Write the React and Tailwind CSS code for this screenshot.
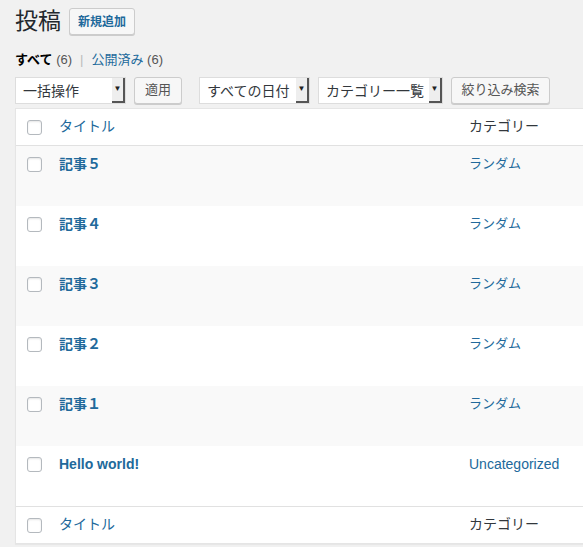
const font = { fontFamily: '"Liberation Sans", "Noto Sans CJK JP", sans-serif' };

const posts = [
	{ title: '記事５', cat: 'ランダム' },
	{ title: '記事４', cat: 'ランダム' },
	{ title: '記事３', cat: 'ランダム' },
	{ title: '記事２', cat: 'ランダム' },
	{ title: '記事１', cat: 'ランダム' },
	{ title: 'Hello world!', cat: 'Uncategorized', latin: true },
];

function Checkbox() {
	return <span className="block h-[15px] w-[15px] rounded-[3px] border border-[#b4b9be] bg-white shadow-[inset_0_1px_2px_rgba(0,0,0,0.1)]" />;
}

function Select({ label, width }) {
	return (
		<div className={`flex h-[27px] items-stretch border border-[#ddd] bg-white ${width}`}>
			<span className="flex-1 truncate whitespace-nowrap pl-[7px] pt-[3px] text-[14px] text-[#32373c]">{label}</span>
			<span className="flex w-[13px] items-center justify-center border-r-2 border-b-2 border-[#555] bg-[#eee] text-[8px] text-[#222]">▼</span>
		</div>
	);
}

function Button({ children, className = '' }) {
	return (
		<button className={`h-[27px] whitespace-nowrap rounded-[3px] border border-[#ccc] bg-[#f7f7f7] shadow-[0_1px_0_#ccc] ${className}`}>
			{children}
		</button>
	);
}

function Row({ post, striped }) {
	return (
		<div className={`flex h-[60px] pt-[8px] ${striped ? 'bg-[#f9f9f9]' : 'bg-white'}`}>
			<div className="w-[43px] pl-[11px] pt-[3px]"><Checkbox /></div>
			<a className="w-[410px] text-[14px] font-bold text-[#21699b]">{post.title}</a>
			<a className={`${post.latin ? 'text-[14px]' : 'text-[13px]'} text-[#21699b]`}>{post.cat}</a>
		</div>
	);
}

function HeadRow() {
	return (
		<div className="flex h-[36px] items-center">
			<div className="w-[43px] pl-[11px] pt-[2px]"><Checkbox /></div>
			<a className="w-[410px] text-[14px] text-[#21699b]">タイトル</a>
			<span className="text-[14px] text-[#32373c]">カテゴリー</span>
		</div>
	);
}

export default function App() {
	return (
		<div className="h-[547px] w-[583px] overflow-hidden bg-[#f1f1f1] pl-[15px]" style={font}>
			<div className="flex items-center gap-[8px] pt-[7px]">
				<h1 className="text-[23px] leading-[29px] text-[#23282d]">投稿</h1>
				<Button className="h-[25px] px-[8px] text-[12px] font-bold text-[#21699b]">新規追加</Button>
			</div>
			<div className="mt-[14px] flex items-center gap-[8px] text-[13px] text-[#555]">
				<span><b className="text-black">すべて</b> (6)</span>
				<span className="text-[#bbb]">|</span>
				<span><span className="text-[#21699b]">公開済み</span> (6)</span>
			</div>
			<div className="mt-[7px] flex items-center">
				<Select label="一括操作" width="w-[111px]" />
				<Button className="ml-[8px] w-[48px] text-[13px] text-[#555]">適用</Button>
				<Select label="すべての日付" width="ml-[17px] w-[111px]" />
				<Select label="カテゴリー一覧" width="ml-[8px] w-[125px]" />
				<Button className="ml-[8px] w-[99px] text-[13px] text-[#555]">絞り込み検索</Button>
			</div>
			<div className="mt-[4px] w-[600px] border border-[#e5e5e5] bg-white shadow-[0_1px_1px_rgba(0,0,0,0.04)]">
				<div className="border-b border-[#e1e1e1]"><HeadRow /></div>
				{posts.map((p, i) => <Row key={i} post={p} striped={i % 2 === 0} />)}
				<div className="border-t border-[#e1e1e1]"><HeadRow /></div>
			</div>
		</div>
	);
}
